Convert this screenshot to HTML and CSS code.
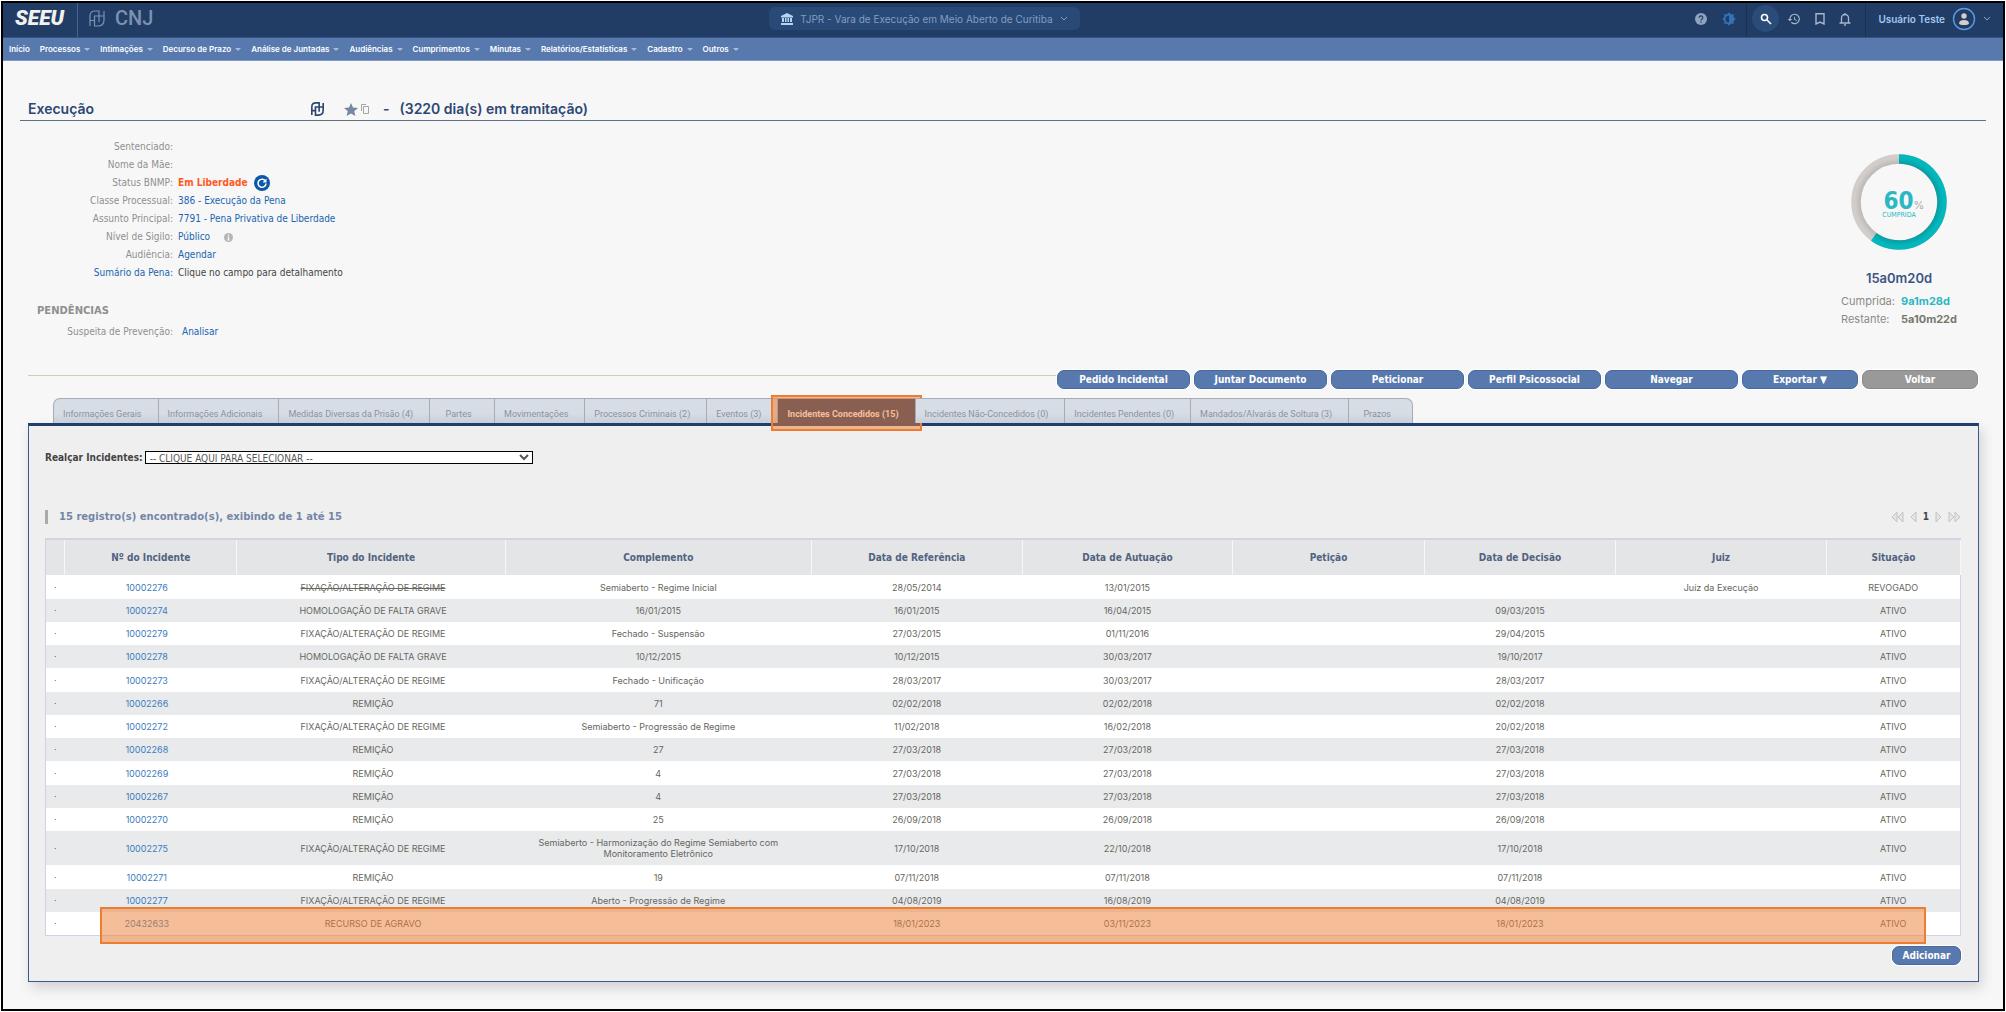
FILE: index.html
```html
<!DOCTYPE html>
<html lang="pt-BR">
<head>
<meta charset="utf-8">
<meta name="viewport" content="width=device-width, initial-scale=1">
<title>SEEU - Execução</title>
<link rel="stylesheet" href="styles.css">
</head>
<body>
<svg class="defs" aria-hidden="true">
  <symbol id="knot" viewBox="0 0 16 17" fill="none" stroke="currentColor">
    <path d="M1 16V6q0-5 5-5h4v11M1 10.500h4.500M15 1v9q0 6-6 6H5.500V6H15"/>
  </symbol>
  <symbol id="chev" viewBox="0 0 8 5" fill="none" stroke="currentColor"><path d="M1 1l3 3 3-3"/></symbol>
</svg>
<div class="page">
  <header class="top">
    <div class="brand">
      <span class="logo">SEEU</span>
      <svg class="knot"><use href="#knot"/></svg>
      <span class="cnj">CNJ</span>
    </div>
    <button class="court" type="button">
      <svg width="12" height="12" viewBox="0 0 12 12" fill="#b5d3f3"><path d="M6 0l6 3v1.500H0V3zM1 5h2v4H1zM4 5h1.500v4H4zM6.500 5H8v4H6.500zM9 5h2v4H9zM0 10h12v2H0z"/></svg>
      <span>TJPR - Vara de Execução em Meio Aberto de Curitiba</span>
      <svg width="8" height="5"><use href="#chev"/></svg>
    </button>
    <div class="tools">
      <div class="group help">
        <button type="button" aria-label="Ajuda"><svg width="12" height="12" viewBox="0 0 12 12"><circle cx="6" cy="6" r="6" fill="#8fa3c0"/><path d="M4.200 4.700a1.800 1.800 0 1 1 2.600 1.500q-.8.5-.8 1.300M6 8.500v1.200" fill="none" stroke="#213d66" stroke-width="1.200"/></svg></button>
        <button type="button" aria-label="Contraste"><svg width="14" height="14" viewBox="0 0 24 24" fill="#3273b8"><path fill-rule="evenodd" d="M20 8.700V4h-4.700L12 .7 8.700 4H4v4.700L.7 12 4 15.300V20h4.700l3.300 3.300 3.300-3.300H20v-4.700l3.300-3.300zM12 6a6 6 0 0 0 0 12z"/></svg></button>
      </div>
      <div class="group search">
        <button class="round" type="button" aria-label="Pesquisar"><svg width="12" height="12" viewBox="0 0 12 12" fill="none" stroke="#fff" stroke-width="1.600"><circle cx="4.500" cy="4.500" r="3"/><path d="M7 7l4 4"/></svg></button>
        <button type="button" aria-label="Histórico"><svg width="14" height="14" viewBox="0 0 24 24" fill="#a9b6cc"><path d="M13 3a9 9 0 0 0-9 9H1l3.900 3.900L9 12H6a7 7 0 1 1 2.100 4.900l-1.400 1.500A9 9 0 1 0 13 3zm-1 5v5l4.300 2.500.7-1.200-3.500-2.100V8z"/></svg></button>
        <button type="button" aria-label="Favoritos"><svg width="10" height="12" viewBox="0 0 10 12" fill="none" stroke="#a9b6cc" stroke-width="1.400"><path d="M1 .7h8V11L5 9l-4 2z"/></svg></button>
        <button type="button" aria-label="Notificações"><svg width="12" height="14" viewBox="0 0 12 14" fill="none" stroke="#a9b6cc" stroke-width="1.300"><path d="M.5 11h11M2.500 11V6a3.500 3.500 0 0 1 7 0v5M6 2.500V1M5 13h2"/></svg></button>
      </div>
      <button class="user" type="button">
        <span>Usuário Teste</span>
        <svg width="24" height="24" viewBox="0 0 24 24"><circle cx="12" cy="12" r="10.500" fill="none" stroke="#5b9ade" stroke-width="1.400"/><circle cx="12" cy="9" r="2.700" fill="#d3cfcb"/><path d="M7 16.500q0-3.500 5-3.500t5 3.500q-1 1.500-5 1.500t-5-1.500z" fill="#d3cfcb"/></svg>
        <svg width="8" height="5"><use href="#chev"/></svg>
      </button>
    </div>
  </header>
  <nav class="menu">
    <a href="#">Início</a>
    <a class="sub" href="#">Processos</a>
    <a class="sub" href="#">Intimações</a>
    <a class="sub" href="#">Decurso de Prazo</a>
    <a class="sub" href="#">Análise de Juntadas</a>
    <a class="sub" href="#">Audiências</a>
    <a class="sub" href="#">Cumprimentos</a>
    <a class="sub" href="#">Minutas</a>
    <a class="sub" href="#">Relatórios/Estatísticas</a>
    <a class="sub" href="#">Cadastro</a>
    <a class="sub" href="#">Outros</a>
  </nav>

  <main>
    <h1 class="title">
      <span class="name">Execução</span>
      <svg class="mark"><use href="#knot"/></svg>
      <svg class="star" width="14" height="13" viewBox="0 0 14 13"><path fill="#7488a6" d="M7 0l2 4.500 5 .5-3.800 3.200L11.400 13 7 10.500 2.600 13l1.200-4.800L0 5l5-.5z"/></svg>
      <svg class="copy" width="8" height="10" viewBox="0 0 8 10" fill="none" stroke="#a5a5a5"><path d="M.5 7V.5H5M2.500 2.500h5v7h-5z"/></svg>
      <span class="dash">-</span>
      <span>(3220 dia(s) em tramitação)</span>
    </h1>

    <section class="summary">
      <div>
        <dl class="facts">
          <dt>Sentenciado:</dt><dd></dd>
          <dt>Nome da Mãe:</dt><dd></dd>
          <dt>Status BNMP:</dt>
          <dd class="status"><span>Em Liberdade</span><button type="button" aria-label="Atualizar"><svg width="16" height="16" viewBox="0 0 16 16"><circle cx="8" cy="8" r="8" fill="#0a56a8"/><path d="M11.300 6A4 4 0 1 0 12 8.500" fill="none" stroke="#fff" stroke-width="1.600"/><path d="M12.500 3.500v4h-4z" fill="#fff"/></svg></button></dd>
          <dt>Classe Processual:</dt><dd><a href="#">386 - Execução da Pena</a></dd>
          <dt>Assunto Principal:</dt><dd><a href="#">7791 - Pena Privativa de Liberdade</a></dd>
          <dt>Nível de Sigilo:</dt>
          <dd class="secrecy"><a href="#">Público</a><svg width="9" height="9" viewBox="0 0 9 9"><circle cx="4.500" cy="4.500" r="4.500" fill="#b5b5b5"/><path d="M4.500 1.500v1.300M3.500 4h1v3M3.300 7h2.500" stroke="#f7f7f7" stroke-width="1.200" fill="none"/></svg></dd>
          <dt>Audiência:</dt><dd><a href="#">Agendar</a></dd>
          <dt><a href="#">Sumário da Pena:</a></dt><dd class="plain">Clique no campo para detalhamento</dd>
        </dl>
        <h2 class="pending">PENDÊNCIAS</h2>
        <dl class="facts wide"><dt>Suspeita de Prevenção:</dt><dd><a href="#">Analisar</a></dd></dl>
      </div>
      <aside class="sentence">
        <div class="gauge">
          <svg width="96" height="96" viewBox="0 0 96 96" fill="none">
            <defs>
              <radialGradient id="done" gradientUnits="userSpaceOnUse" cx="48" cy="48" r="48"><stop offset=".78" stop-color="#0a989d"/><stop offset=".92" stop-color="#03b8bd"/></radialGradient>
              <radialGradient id="left" gradientUnits="userSpaceOnUse" cx="48" cy="48" r="48"><stop offset=".78" stop-color="#b9b5b2"/><stop offset=".92" stop-color="#d1cdca"/></radialGradient>
            </defs>
            <circle cx="48" cy="48" r="43" stroke="url(#left)" stroke-width="9.500"/>
            <path d="M48 5a43 43 0 1 1-25.270 77.790" stroke="url(#done)" stroke-width="9.500"/>
          </svg>
          <div class="reading"><div><b>60</b><i>%</i></div><small>CUMPRIDA</small></div>
        </div>
        <p class="total">15a0m20d</p>
        <dl class="split">
          <dt>Cumprida:</dt><dd class="teal">9a1m28d</dd>
          <dt>Restante:</dt><dd>5a10m22d</dd>
        </dl>
      </aside>
    </section>

    <div class="actions">
      <button class="btn" type="button">Pedido Incidental</button>
      <button class="btn" type="button">Juntar Documento</button>
      <button class="btn" type="button">Peticionar</button>
      <button class="btn" type="button">Perfil Psicossocial</button>
      <button class="btn" type="button">Navegar</button>
      <button class="btn short" type="button">Exportar ▼</button>
      <button class="btn short gray" type="button">Voltar</button>
    </div>

    <div class="tabs">
      <a href="#">Informações Gerais</a>
      <a href="#">Informações Adicionais</a>
      <a href="#">Medidas Diversas da Prisão (4)</a>
      <a href="#">Partes</a>
      <a href="#">Movimentações</a>
      <a href="#">Processos Criminais (2)</a>
      <a href="#">Eventos (3)</a>
      <a class="active" href="#">Incidentes Concedidos (15)</a>
      <a href="#">Incidentes Não-Concedidos (0)</a>
      <a href="#">Incidentes Pendentes (0)</a>
      <a href="#">Mandados/Alvarás de Soltura (3)</a>
      <a href="#">Prazos</a>
    </div>

    <section class="panel">
      <div class="filter">
        <label for="realce">Realçar Incidentes:</label>
        <select id="realce"><option>-- CLIQUE AQUI PARA SELECIONAR --</option></select>
      </div>
      <div class="records">
        <p>15 registro(s) encontrado(s), exibindo de 1 até 15</p>
        <div class="pager">
          <svg width="13" height="12" viewBox="0 0 13 12"><path d="M6 1v10L1 6zM12 1v10L7 6z"/></svg>
          <svg width="7" height="12" viewBox="0 0 7 12"><path d="M6 1v10L1 6z"/></svg>
          <b>1</b>
          <svg width="7" height="12" viewBox="0 0 7 12"><path d="M1 1v10l5-5z"/></svg>
          <svg width="13" height="12" viewBox="0 0 13 12"><path d="M1 1v10l5-5zM7 1v10l5-5z"/></svg>
        </div>
      </div>
      <div class="grid">
        <table>
          <colgroup><col class="w1"><col class="w9"><col class="w14"><col class="w16"><col class="w11"><col class="w11"><col class="w10"><col class="w10"><col class="w11"><col class="w7"></colgroup>
          <thead><tr><th></th><th>Nº do Incidente</th><th>Tipo do Incidente</th><th>Complemento</th><th>Data de Referência</th><th>Data de Autuação</th><th>Petição</th><th>Data de Decisão</th><th>Juiz</th><th>Situação</th></tr></thead>
          <tbody>
            <tr><td>·</td><td><a href="#">10002276</a></td><td><s>FIXAÇÃO/ALTERAÇÃO DE REGIME</s></td><td>Semiaberto - Regime Inicial</td><td>28/05/2014</td><td>13/01/2015</td><td></td><td></td><td>Juiz da Execução</td><td>REVOGADO</td></tr>
            <tr><td>·</td><td><a href="#">10002274</a></td><td>HOMOLOGAÇÃO DE FALTA GRAVE</td><td>16/01/2015</td><td>16/01/2015</td><td>16/04/2015</td><td></td><td>09/03/2015</td><td></td><td>ATIVO</td></tr>
            <tr><td>·</td><td><a href="#">10002279</a></td><td>FIXAÇÃO/ALTERAÇÃO DE REGIME</td><td>Fechado - Suspensão</td><td>27/03/2015</td><td>01/11/2016</td><td></td><td>29/04/2015</td><td></td><td>ATIVO</td></tr>
            <tr><td>·</td><td><a href="#">10002278</a></td><td>HOMOLOGAÇÃO DE FALTA GRAVE</td><td>10/12/2015</td><td>10/12/2015</td><td>30/03/2017</td><td></td><td>19/10/2017</td><td></td><td>ATIVO</td></tr>
            <tr><td>·</td><td><a href="#">10002273</a></td><td>FIXAÇÃO/ALTERAÇÃO DE REGIME</td><td>Fechado - Unificação</td><td>28/03/2017</td><td>30/03/2017</td><td></td><td>28/03/2017</td><td></td><td>ATIVO</td></tr>
            <tr><td>·</td><td><a href="#">10002266</a></td><td>REMIÇÃO</td><td>71</td><td>02/02/2018</td><td>02/02/2018</td><td></td><td>02/02/2018</td><td></td><td>ATIVO</td></tr>
            <tr><td>·</td><td><a href="#">10002272</a></td><td>FIXAÇÃO/ALTERAÇÃO DE REGIME</td><td>Semiaberto - Progressão de Regime</td><td>11/02/2018</td><td>16/02/2018</td><td></td><td>20/02/2018</td><td></td><td>ATIVO</td></tr>
            <tr><td>·</td><td><a href="#">10002268</a></td><td>REMIÇÃO</td><td>27</td><td>27/03/2018</td><td>27/03/2018</td><td></td><td>27/03/2018</td><td></td><td>ATIVO</td></tr>
            <tr><td>·</td><td><a href="#">10002269</a></td><td>REMIÇÃO</td><td>4</td><td>27/03/2018</td><td>27/03/2018</td><td></td><td>27/03/2018</td><td></td><td>ATIVO</td></tr>
            <tr><td>·</td><td><a href="#">10002267</a></td><td>REMIÇÃO</td><td>4</td><td>27/03/2018</td><td>27/03/2018</td><td></td><td>27/03/2018</td><td></td><td>ATIVO</td></tr>
            <tr><td>·</td><td><a href="#">10002270</a></td><td>REMIÇÃO</td><td>25</td><td>26/09/2018</td><td>26/09/2018</td><td></td><td>26/09/2018</td><td></td><td>ATIVO</td></tr>
            <tr><td>·</td><td><a href="#">10002275</a></td><td>FIXAÇÃO/ALTERAÇÃO DE REGIME</td><td>Semiaberto - Harmonização do Regime Semiaberto com Monitoramento Eletrônico</td><td>17/10/2018</td><td>22/10/2018</td><td></td><td>17/10/2018</td><td></td><td>ATIVO</td></tr>
            <tr><td>·</td><td><a href="#">10002271</a></td><td>REMIÇÃO</td><td>19</td><td>07/11/2018</td><td>07/11/2018</td><td></td><td>07/11/2018</td><td></td><td>ATIVO</td></tr>
            <tr><td>·</td><td><a href="#">10002277</a></td><td>FIXAÇÃO/ALTERAÇÃO DE REGIME</td><td>Aberto - Progressão de Regime</td><td>04/08/2019</td><td>16/08/2019</td><td></td><td>04/08/2019</td><td></td><td>ATIVO</td></tr>
            <tr><td>·</td><td><a href="#">20432633</a></td><td>RECURSO DE AGRAVO</td><td></td><td>18/01/2023</td><td>03/11/2023</td><td></td><td>18/01/2023</td><td></td><td>ATIVO</td></tr>
          </tbody>
        </table>
        <div class="mark-row"></div>
      </div>
      <div class="foot"><button class="btn add" type="button">Adicionar</button></div>
    </section>
  </main>
</div>
</body>
</html>
```
FILE: styles.css
```css
* { box-sizing: border-box; }
:root {
  --navy: #213d66;
  --blue: #5779ae;
  --link: #1b65b0;
  --orange: #ed7d31;
  --ui: Inter, "Liberation Sans", sans-serif;
  --text: "DejaVu Sans Condensed", "DejaVu Sans", sans-serif;
}
body { margin: 0; padding: 1px; min-height: 100vh; display: flex; background: #fff; font: 10px/18px var(--text); color: #444; }
a { color: var(--link); text-decoration: none; }
button { border: 0; padding: 0; background: none; font: inherit; color: inherit; display: flex; align-items: center; }
svg { display: block; flex: none; }
h1, h2, p, dl, dd { margin: 0; }
.defs { position: absolute; width: 0; height: 0; }
.page { flex: 1; min-width: 0; border: 2px solid #000; background: #f7f7f7; }

.top { height: 35px; display: flex; justify-content: space-between; background: var(--navy); border-bottom: 1px solid #345381; font: 10px/14px var(--ui); }
.brand { display: flex; color: #7d91b0; }
.logo { width: 75px; padding-left: 12px; border-right: 1px solid #4a668f; color: #f3f1ee; font: italic 900 21px/31px Roboto, sans-serif; }
.knot { width: 16px; height: 17px; margin: 7px 10px 0 11px; stroke-width: 1.2; }
.cnj { font: 500 20px/31px Roboto, sans-serif; }
.court { height: 23px; margin-top: 4px; padding: 0 12px; gap: 7px; border-radius: 6px; background: #294a76; color: #839dc1; }
.tools { display: flex; color: #8fa3c0; }
.group, .user { padding-bottom: 3px; }
.group { display: flex; align-items: center; border-right: 1px solid #1a3050; }
.help { gap: 15px; padding-right: 10px; }
.search { gap: 14px; padding-left: 5px; padding-right: 14px; }
.round { width: 27px; height: 27px; border-radius: 50%; background: #2b4b78; justify-content: center; }
.search .round { margin-right: -6px; }
.user { gap: 7px; padding-left: 12px; padding-right: 12px; }
.user span { color: #a3c6ee; font-weight: 600; }

.menu { height: 23px; display: flex; align-items: center; gap: 10px; padding-left: 6px; background: var(--blue); border-bottom: 1px solid #7f9cc9; font: 600 8px/22px var(--ui); }
.menu a { color: #fff; display: flex; align-items: center; gap: 4px; }
.sub::after { content: ""; border: 3px solid transparent; border-top-color: #a9bbd8; border-bottom: 0; }

main { padding: 37px 17px 0; }
.title { display: flex; align-items: center; height: 23px; padding-left: 8px; border-bottom: 1px solid #5f7084; color: #2c4774; font: 600 14px/22px var(--ui); }
.name { width: 283px; }
.mark { width: 13px; height: 14px; margin-right: 20px; stroke-width: 2; }
.star { margin-right: 3px; }
.copy { margin-right: 14px; }
.dash { margin-right: 10px; }

.summary { display: flex; justify-content: space-between; padding: 17px 0 0 17px; }
.facts { display: grid; grid-template-columns: 136px auto; column-gap: 5px; grid-auto-rows: 18px; }
.wide { column-gap: 9px; margin-top: 3px; }
.facts dt { text-align: right; color: #8f8f8f; }
.status, .secrecy { display: flex; align-items: center; gap: 6px; }
.status { color: #ff5a1f; font-weight: bold; }
.secrecy { gap: 14px; }
.plain { color: #444; }
.pending { margin-top: 20px; color: #8f8f8f; font: bold 10px/18px "DejaVu Sans", sans-serif; }

.sentence { width: 130px; margin: 16px 22px 0 0; display: flex; flex-direction: column; align-items: center; font-family: var(--ui); }
.gauge { display: grid; place-items: center; }
.gauge > * { grid-area: 1 / 1; }
.reading { padding-top: 6px; text-align: center; color: #2bb8c4; font-family: var(--text); }
.reading div { display: flex; align-items: baseline; padding-left: 10px; line-height: 20px; }
.reading b { font-size: 24px; }
.reading i { font: 11px/12px var(--ui); color: #aaa; }
.reading small { display: block; font-size: 7px; line-height: 8px; }
.total { margin-top: 19px; color: #3c5585; font: 600 13px/18px var(--ui); }
.split { display: grid; grid-template-columns: 60px auto; margin-top: 5px; font-size: 11px; line-height: 18px; color: #8b8b87; }
.split dd { font-weight: bold; color: #77776e; }
.split .teal { color: #2bb8c4; }

.actions { display: flex; gap: 4px; margin: 29px 8px 9px 8px; }
.actions::before { content: ""; flex: 1; height: 1px; margin: 5px -4px 0 0; background: #d3cdb4; }
.btn { width: 133px; height: 19px; justify-content: center; border: 1px solid #47699f; border-radius: 7px; background: var(--blue); color: #fff; font-weight: bold; line-height: 14px; box-shadow: 0 0 0 1px #fff; }
.short { width: 116px; }
.gray { background: #999; border-color: #8a8a8a; }

.tabs { display: flex; margin-left: 33px; font: 9px/12px Roboto, var(--ui); position: relative; z-index: 1; }
.tabs a { position: relative; min-width: 65px; height: 25px; padding: 9px 16px 0 9px; text-align: center; white-space: nowrap; color: #8b929d; background: linear-gradient(#d7dde5 60%, #c8cfd9); border: solid #a7abb3; border-width: 1px 0 0 1px; }
.tabs a:first-child { border-top-left-radius: 7px; }
.tabs a:last-child { border-right-width: 1px; border-top-right-radius: 7px; }
.tabs .active { background: #234070; color: #fff; font-weight: bold; }
.active::after { content: ""; position: absolute; inset: -4px -7px -8px -7px; border: 2px solid var(--orange); background: rgb(237 125 49 / 50%); }

.panel { margin: 0 7px 0 8px; padding: 25px 17px 16px 16px; border: 1px solid #3a5a8c; border-top: 3px solid #1f3d6d; background: #efefef; box-shadow: 3px 6px 12px rgb(0 0 0 / 15%); }
.filter { display: flex; align-items: center; height: 13px; font-weight: bold; }
.filter select { width: 388px; height: 13px; margin-left: 2px; padding: 0; border: 1px solid #000; border-radius: 0; background: #fff; color: #555; font: 10px/11px var(--text); }
.records { display: flex; justify-content: space-between; align-items: center; margin: 46px 0 14px; height: 14px; }
.records p { padding-left: 11px; border-left: 3px solid #aaa; color: #7486a8; font: bold 10px/14px "DejaVu Sans", sans-serif; }
.pager { display: flex; align-items: center; gap: 6px; }
.pager path { fill: #e4e4e4; stroke: #c4c4c4; }

.grid { position: relative; }
table { width: 100%; table-layout: fixed; border-collapse: collapse; border: 1px solid #d2cfe6; border-top: 0; font: 9px/11px var(--ui); text-align: center; color: #66665e; }
.w1 { width: 1%; } .w7 { width: 7%; } .w9 { width: 9%; } .w10 { width: 10%; }
.w11 { width: 11%; } .w14 { width: 14%; } .w16 { width: 16%; }
th { height: 36px; padding: 0; background: #e3e5e7; border-top: 2px solid #d3d3e6; border-right: 1px solid #f7f7f7; color: #52627f; font: bold 10px/14px var(--text); }
td { height: 23px; padding: 6px 4px; background: #fff; }
td:nth-child(2) { padding-right: 12px; }
td:nth-child(3) { padding-left: 8px; }
tr:nth-child(4n+1) td { height: 24px; }
tr:nth-child(even) td { background: #e9eaec; }
td a { color: #3b7cc0; }
.mark-row { position: absolute; left: 55px; right: 35px; bottom: -8px; height: 37px; border: 2px solid var(--orange); background: rgb(237 125 49 / 50%); }
.foot { display: flex; justify-content: flex-end; margin-top: 10px; }
.add { width: 69px; }
```
